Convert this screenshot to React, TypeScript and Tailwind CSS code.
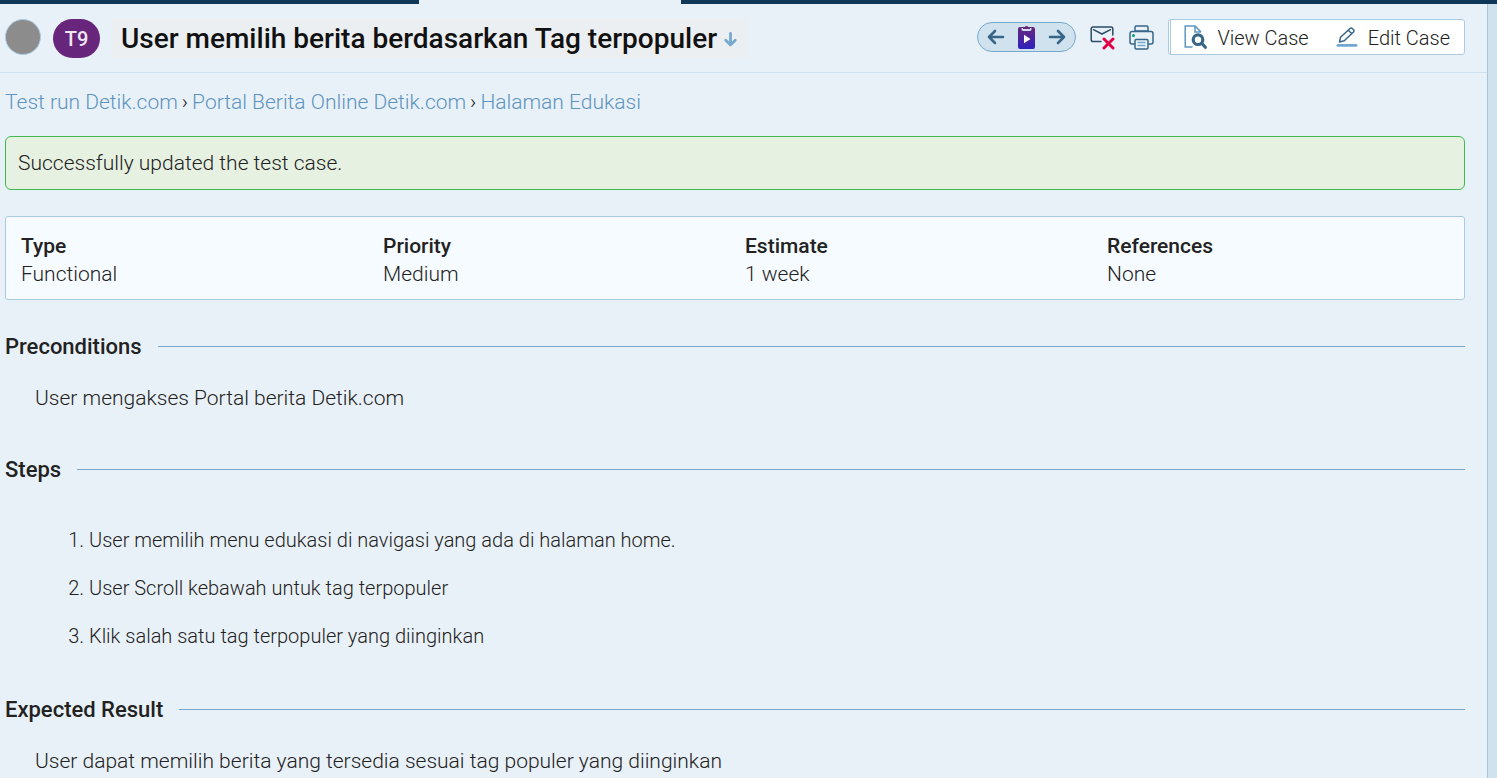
import type { ReactNode } from "react";

const crumbs = ["Test run Detik.com", "Portal Berita Online Detik.com", "Halaman Edukasi"];

const fields = [
  { label: "Type", value: "Functional" },
  { label: "Priority", value: "Medium" },
  { label: "Estimate", value: "1 week" },
  { label: "References", value: "None" },
];

const steps = [
  "User memilih menu edukasi di navigasi yang ada di halaman home.",
  "User Scroll kebawah untuk tag terpopuler",
  "Klik salah satu tag terpopuler yang diinginkan",
];

function ArrowIcon({ flip = false }: { flip?: boolean }) {
  return (
    <svg width="18" height="16" viewBox="0 0 18 16" fill="none" stroke="#376688" strokeWidth="2.6" strokeLinecap="round" strokeLinejoin="round" className={flip ? "rotate-180" : ""}>
      <path d="M16 8H2M8 2L2 8l6 6" />
    </svg>
  );
}

function RunIcon() {
  return (
    <svg width="17" height="23" viewBox="0 0 17 23">
      <defs>
        <linearGradient id="run" x1="0" y1="0" x2="0" y2="1">
          <stop offset="0" stopColor="#67267c" />
          <stop offset="1" stopColor="#3022bd" />
        </linearGradient>
      </defs>
      <rect y="1" width="17" height="22" rx="2" fill="url(#run)" />
      <path d="M3.5 2h10v1.2a1.8 1.8 0 0 1-1.8 1.8H5.3a1.8 1.8 0 0 1-1.8-1.8z" fill="#d0e2ed" />
      <path d="M5 3V1.8a.8.8 0 0 1 .8-.8H7a1.6 1.6 0 0 1 3 0h1.2a.8.8 0 0 1 .8.8V3z" fill="#67267c" />
      <path d="M6 8.800l6.500 4.200L6 17.200z" fill="#fff" />
    </svg>
  );
}

function MailOffIcon() {
  return (
    <svg width="25" height="25" viewBox="0 0 25 25" fill="none">
      <path d="M11 16.5H3A1.8 1.8 0 0 1 1.2 14.7V3.8A1.8 1.8 0 0 1 3 2h18a1.8 1.8 0 0 1 1.8 1.8V10" stroke="#294d66" strokeWidth="1.5" strokeLinecap="round" />
      <path d="M3.500 4.700L12 9l8.500-4.300" stroke="#294d66" strokeWidth="1.500" strokeLinecap="round" strokeLinejoin="round" />
      <path d="M14 14l9 9M23 14l-9 9" stroke="#e40046" strokeWidth="3" strokeLinecap="round" />
    </svg>
  );
}

function PrinterIcon() {
  return (
    <svg width="25" height="25" viewBox="0 0 25 25" fill="none" stroke="#376688" strokeWidth="1.5">
      <path d="M6 6V2.200A1.200 1.200 0 0 1 7.200 1h10.600A1.200 1.200 0 0 1 19 2.200V6z" />
      <path d="M6 19H3a2 2 0 0 1-2-2V8.500a2 2 0 0 1 2-2h19a2 2 0 0 1 2 2V17a2 2 0 0 1-2 2h-3" />
      <rect x="6" y="14.500" width="13" height="9.500" rx="1.200" fill="#eef6fd" />
      <path d="M8.500 17.500h8M8.500 20.500h8" stroke="#72a7cf" />
      <circle cx="4.500" cy="10.500" r="1.500" fill="#00a37a" stroke="none" />
    </svg>
  );
}

function ViewIcon() {
  return (
    <svg width="23" height="24" viewBox="0 0 23 24" fill="none">
      <path d="M8.500 22H1.200V1H11l6 6M11 1v6h6" stroke="#5d98c4" strokeWidth="1.500" />
      <circle cx="14" cy="14.700" r="4.800" stroke="#376688" strokeWidth="3.200" />
      <path d="M18 18.500l3.300 3.700" stroke="#376688" strokeWidth="3.200" strokeLinecap="round" />
    </svg>
  );
}

function EditIcon() {
  return (
    <svg width="22" height="20" viewBox="0 0 22 20" fill="none">
      <path d="M3.500 15l1-4.700L14 1.500a1.700 1.700 0 0 1 2.300 0l1.200 1.200a1.700 1.700 0 0 1 0 2.300L8.300 13.800zM12.300 3.300l3.500 3.500" stroke="#376688" strokeWidth="1.500" strokeLinejoin="round" />
      <rect x="0.500" y="17" width="21" height="2.700" rx="1.300" fill="#72a7cf" />
    </svg>
  );
}

function Section({ title, children }: { title: string; children: ReactNode }) {
  return (
    <section>
      <div className="flex h-7 items-center gap-4">
        <h2 className="text-[22px] font-medium">{title}</h2>
        <div className="h-px flex-1 bg-[#77a9ce]" />
      </div>
      {children}
    </section>
  );
}

export default function App() {
  return (
    <div className="flex min-h-screen flex-col overflow-hidden bg-[#e9f1f8] font-['Roboto',sans-serif] text-[21px] font-light text-[#222]">
      <div className="flex h-1">
        <div className="w-[28%] bg-[#0f3757]" />
        <div className="w-[17.5%]" />
        <div className="flex-1 bg-[#0f3757]" />
      </div>
      <div className="flex flex-1">
        <main className="min-w-0 flex-1">
          <header className="flex h-[69px] items-center justify-between border-b border-[#cfe1ec] pr-[22px] pl-[5px]">
            <div className="flex items-center">
              <span className="mb-[2px] size-9 rounded-full border border-[#a9cbe2] bg-[#8c8c8c]" />
              <span className="ml-3 flex h-[39px] w-[47px] items-center justify-center rounded-full bg-[#67267c] pt-[2px] text-[20px] font-medium text-[#efe8f2]">T9</span>
              <h1 className="ml-3 flex h-[38px] items-center gap-[7px] bg-[#ebeff2] px-[9px] pt-[2px] text-[28px] font-medium whitespace-nowrap text-[#111]">
                User memilih berita berdasarkan Tag terpopuler
                <button type="button" aria-label="More details">
                  <svg width="13" height="15" viewBox="0 0 13 15" fill="none" stroke="#77a9ce" strokeWidth="2.8" strokeLinecap="round" strokeLinejoin="round">
                    <path d="M6.500 1.500v11M1.800 8.300l4.700 4.700 4.700-4.700" />
                  </svg>
                </button>
              </h1>
            </div>
            <div className="flex shrink-0 items-center pb-[2px] text-[20px]">
              <div className="flex h-[30px] w-[99px] items-center justify-between rounded-full border border-[#77a9ce] bg-[#d0e2ed] px-[9px]">
                <button type="button" aria-label="Previous test"><ArrowIcon /></button>
                <button type="button" aria-label="Run test"><RunIcon /></button>
                <button type="button" aria-label="Next test"><ArrowIcon flip /></button>
              </div>
              <button type="button" aria-label="Unsubscribe" className="ml-[14px]"><MailOffIcon /></button>
              <button type="button" aria-label="Print" className="ml-[14px]"><PrinterIcon /></button>
              <div className="ml-[14px] flex h-9 rounded-[3px] border border-[#a9cbe2] bg-white pr-[14px]">
                <div className="mr-[13px] w-[2px] border-r border-[#a9cbe2]" />
                <button type="button" className="flex items-center gap-[10px]"><ViewIcon /><span className="pt-[2px]">View Case</span></button>
                <button type="button" className="ml-[27px] flex items-center gap-[10px]"><EditIcon /><span className="pt-[2px]">Edit Case</span></button>
              </div>
            </div>
          </header>
          <div className="pr-[22px] pl-[5px]">
            <nav aria-label="Breadcrumb" className="mt-4 flex h-7 items-center gap-1">
              {crumbs.map((crumb, i) => (
                <span key={crumb} className="flex gap-1">
                  {i > 0 && <span>›</span>}
                  <a href="#" className="text-[#5d93bf]">{crumb}</a>
                </span>
              ))}
            </nav>
            <div role="status" className="mt-[19px] flex h-[54px] items-center rounded-md border border-[#3fb950] bg-[#e6f1e1] px-3 pt-[2px]">
              Successfully updated the test case.
            </div>
            <dl className="mt-[26px] grid h-[84px] grid-cols-4 content-center gap-x-[5px] rounded-[3px] border border-[#a9cbe2] bg-[#f6fbff] pt-1 pl-[15px]">
              {fields.map((field) => (
                <div key={field.label} className="leading-7">
                  <dt className="font-medium">{field.label}</dt>
                  <dd>{field.value}</dd>
                </div>
              ))}
            </dl>
            <div className="mt-8">
              <Section title="Preconditions">
                <p className="mt-6 mb-[43px] pl-[30px] leading-7">User mengakses Portal berita Detik.com</p>
              </Section>
              <Section title="Steps">
                <ol className="mt-[43px] mb-[45px] flex list-decimal flex-col gap-5 pl-[84px] text-[20px] leading-7">
                  {steps.map((step) => <li key={step}>{step}</li>)}
                </ol>
              </Section>
              <Section title="Expected Result">
                <p className="mt-6 pl-[30px] leading-7">User dapat memilih berita yang tersedia sesuai tag populer yang diinginkan</p>
              </Section>
            </div>
          </div>
        </main>
        <div className="w-[10px] border-l border-[#a9c6da] bg-[#d0e2ed]" />
      </div>
    </div>
  );
}
